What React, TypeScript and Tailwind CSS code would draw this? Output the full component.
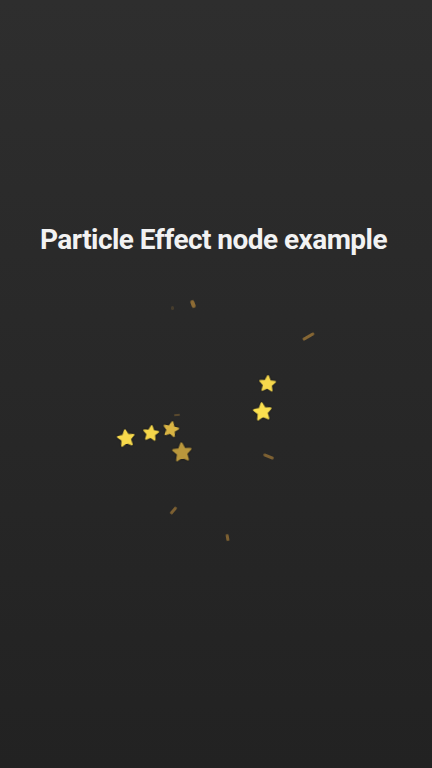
import React from 'react';

type Star = { x: number; y: number; s: number; c: string; r: number };
type Streak = { x: number; y: number; w: number; h: number; r: number; o: number };

const stars: Star[] = [
  { x: 126, y: 438, s: 20, c: '#f7d94c', r: -8 },
  { x: 151, y: 433, s: 18, c: '#f5d64a', r: 6 },
  { x: 171, y: 429, s: 18, c: '#d9b444', r: 12 },
  { x: 182, y: 452, s: 22, c: '#b9973c', r: -4 },
  { x: 267, y: 383, s: 19, c: '#f7d94c', r: 4 },
  { x: 262, y: 411, s: 21, c: '#fbe04f', r: -6 },
];

const streaks: Streak[] = [
  { x: 193, y: 304, w: 4, h: 8, r: -20, o: 0.7 },
  { x: 172, y: 308, w: 3, h: 4, r: 0, o: 0.2 },
  { x: 308, y: 336, w: 3, h: 13, r: 60, o: 0.65 },
  { x: 268, y: 456, w: 3, h: 11, r: -68, o: 0.6 },
  { x: 173, y: 510, w: 3, h: 9, r: 40, o: 0.6 },
  { x: 227, y: 537, w: 3, h: 7, r: -10, o: 0.6 },
  { x: 177, y: 415, w: 2, h: 6, r: 85, o: 0.35 },
];

const StarShape = ({ color }: { color: string }) => (
  <svg viewBox="0 0 24 24" className="h-full w-full drop-shadow-[0_0_1px_rgba(0,0,0,0.6)]">
    <path
      d="M12 2.5l2.9 6.1 6.6.8-4.9 4.6 1.3 6.6L12 17.3l-5.9 3.3 1.3-6.6-4.9-4.6 6.6-.8z"
      fill={color}
      stroke={color}
      strokeWidth="2.2"
      strokeLinejoin="round"
    />
  </svg>
);

const App = () => {
  return (
    <div className="relative h-[768px] w-[432px] overflow-hidden bg-gradient-to-b from-[#2e2e2e] to-[#222222]">
      <div className="flex justify-center pt-[221px] pr-[5px]">
        <h1 className="font-['Roboto',sans-serif] text-[28px] font-bold leading-[38px] tracking-[-0.55px] text-[#f2f2f2]">
          Particle Effect node example
        </h1>
      </div>

      {streaks.map((p, i) => (
        <div
          key={'s' + i}
          className="absolute rounded-full bg-[#b8883a] blur-[0.4px]"
          style={{
            left: p.x - p.w / 2,
            top: p.y - p.h / 2,
            width: p.w,
            height: p.h,
            opacity: p.o,
            transform: `rotate(${p.r}deg)`,
          }}
        />
      ))}

      {stars.map((st, i) => (
        <div
          key={'t' + i}
          className="absolute"
          style={{
            left: st.x - st.s / 2,
            top: st.y - st.s / 2,
            width: st.s,
            height: st.s,
            transform: `rotate(${st.r}deg)`,
          }}
        >
          <StarShape color={st.c} />
        </div>
      ))}
    </div>
  );
};

export default App;
